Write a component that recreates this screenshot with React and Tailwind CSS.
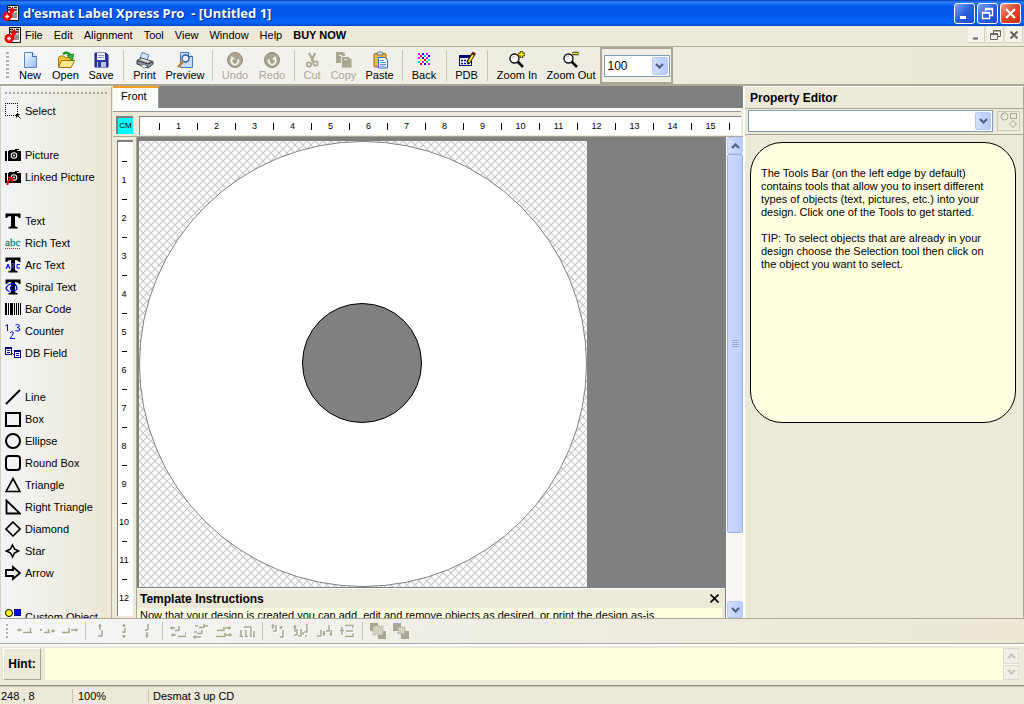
import React from "react";

const G = "#a9a691";

/* ---------- main toolbar icons (20 x 18) ---------- */
const Ico = ({ children, w = 20, h = 18 }) => (
  <svg width={w} height={h} viewBox={`0 0 ${w} ${h}`} fill="none" aria-hidden="true" className="block shrink-0">
    {children}
  </svg>
);

const NewIcon = () => (
  <Ico>
    <defs>
      <linearGradient id="pg" x1="0" y1="0" x2="1" y2="1">
        <stop offset="0" stopColor="#ffffff" />
        <stop offset="1" stopColor="#8fb8f0" />
      </linearGradient>
    </defs>
    <path d="M4.500 1.500H12.500L16.500 5.500V16.500H4.500Z" fill="url(#pg)" stroke="#5a86c8" />
    <path d="M12.500 1.500V5.500H16.500" fill="#e8f1ff" stroke="#3a66b0" />
  </Ico>
);
const OpenIcon = () => (
  <Ico>
    <path d="M2.500 16V6.500L4 5H8L9.500 6.500H15.500V9" fill="#f3c33c" stroke="#a8750a" />
    <path d="M2.500 16.500L5.500 9.500H18.500L15 16.500Z" fill="#ffe88a" stroke="#a8750a" />
    <path d="M7 3Q12 0 14.500 4.500" stroke="#1c8a1c" strokeWidth="2.400" />
    <path d="M11 4.500L17.500 3L16.500 10Z" fill="#35b635" stroke="#146a14" strokeWidth="0.700" />
  </Ico>
);
const SaveIcon = () => (
  <Ico>
    <path d="M4 2H15L17 4V16H4Z" fill="#2f35a8" stroke="#1b1f7a" />
    <rect x="6" y="2" width="8" height="7" fill="#e9eefb" />
    <path d="M7 4.500H13M7 6.500H13" stroke="#8d94c9" />
    <rect x="6" y="11" width="9" height="5" fill="#b9c0e6" />
    <rect x="7" y="11" width="3" height="5" fill="#2f35a8" />
  </Ico>
);
const PrintIcon = () => (
  <Ico>
    <path d="M5 7L7 1.500L14 4L12 9Z" fill="#cfe2ff" stroke="#5d83bd" />
    <path d="M2 9.500L6 7L18 10.500V13L13 17L2 13Z" fill="#8d949c" stroke="#3a3f46" />
    <path d="M2 9.500L13 13L18 10.500" stroke="#33373c" />
    <path d="M4 8.800L7 7.400L15 10L12.500 11.500Z" fill="#d6dbe0" />
    <path d="M5 14.500L9 13.500L13 15L9.500 17Z" fill="#f4f7fb" stroke="#565b62" strokeWidth="0.700" />
  </Ico>
);
const PreviewIcon = () => (
  <Ico>
    <path d="M5.500 1.500H13.500L17.500 5.500V16.500H5.500Z" fill="#c8dcfa" stroke="#4778c4" />
    <path d="M13.500 1.500V5.500H17.500" fill="#fff" stroke="#3a66b0" />
    <circle cx="10.500" cy="7.500" r="3.500" fill="#eef6ff" stroke="#2d5fb0" strokeWidth="1.400" />
    <path d="M8 10.500L3.500 15.500" stroke="#c07b28" strokeWidth="2.400" strokeLinecap="round" />
  </Ico>
);
const UndoIcon = () => (
  <Ico>
    <circle cx="10" cy="9" r="7.500" fill={G} stroke="#8f8c7a" />
    <path d="M7 8A3.500 3.500 0 1 0 13 8.500" stroke="#f3f2ea" strokeWidth="1.800" />
    <path d="M5.500 9.500L6.500 5L10 8Z" fill="#f3f2ea" />
  </Ico>
);
const RedoIcon = () => (
  <Ico>
    <circle cx="10" cy="9" r="7.500" fill={G} stroke="#8f8c7a" />
    <path d="M13 8A3.500 3.500 0 1 1 7 8.500" stroke="#f3f2ea" strokeWidth="1.800" />
    <path d="M14.500 9.500L13.500 5L10 8Z" fill="#f3f2ea" />
  </Ico>
);
const CutIcon = () => (
  <Ico>
    <path d="M7 2L11.500 11M13 2L9.500 10" stroke={G} strokeWidth="2" />
    <circle cx="7" cy="13.500" r="2.200" stroke={G} strokeWidth="1.700" />
    <circle cx="13.500" cy="12.500" r="2.200" stroke={G} strokeWidth="1.700" />
  </Ico>
);
const CopyIcon = () => (
  <Ico>
    <path d="M2 1H9L11 3V12H2Z" fill={G} />
    <path d="M7.500 5.500H14L18 8.500V17H7.500Z" fill={G} stroke="#ece9dc" />
    <path d="M10 8.500H13M5 4.500H8" stroke="#ece9dc" />
  </Ico>
);
const PasteIcon = () => (
  <Ico>
    <rect x="4" y="2.500" width="12" height="13.500" rx="1" fill="#f0b93a" stroke="#9a6b12" />
    <path d="M7 4V2L8.500 1H11.500L13 2V4Z" fill="#d5dae4" stroke="#555e70" strokeWidth="0.800" />
    <path d="M8.500 6.500H15L17.500 9V17H8.500Z" fill="#f2f7ff" stroke="#3a6cc0" />
    <path d="M10 9.500H14M10 11.500H16M10 13.500H16M10 15.200H15" stroke="#5f92dd" />
  </Ico>
);
const confetti = [
  ["#f0f", 4, 2], ["#00f", 8, 2], ["#f0f", 12, 2], ["#f00", 6, 4], ["#0cf", 10, 4], ["#00f", 14, 4],
  ["#f0f", 4, 6], ["#00c", 8, 6], ["#f0f", 12, 6], ["#ff0", 6, 8], ["#f00", 10, 8], ["#0ff", 14, 8],
  ["#0cf", 4, 10], ["#f0f", 8, 10], ["#3c3", 12, 10], ["#f00", 6, 12], ["#00f", 10, 12], ["#f0f", 14, 12],
];
const BackIcon = () => (
  <Ico>
    <rect x="4" y="2" width="12" height="12" fill="#fff" />
    {confetti.map(([c, x, y], i) => <rect key={i} x={x} y={y} width="2" height="2" fill={c} />)}
  </Ico>
);
const PdbIcon = () => (
  <Ico>
    <rect x="2.500" y="4.500" width="12" height="10" fill="#fff" stroke="#000080" />
    <rect x="2" y="4" width="13" height="3" fill="#000080" />
    <path d="M4 9.500H13M4 12.500H13" stroke="#000080" strokeWidth="1.500" strokeDasharray="2 1" />
    <path d="M17 2L11 12" stroke="#222" strokeWidth="4" />
    <path d="M16 4L11.800 11" stroke="#ffe600" strokeWidth="2" />
    <path d="M17.500 1.500L16.500 3" stroke="#8a1414" strokeWidth="3" />
  </Ico>
);
const Lens = ({ plus }) => (
  <Ico>
    <circle cx="7.500" cy="7.500" r="4.500" fill="#fff" stroke="#111" strokeWidth="1.400" />
    <path d="M10.500 10.500L16 16" stroke="#111" strokeWidth="2.600" />
    <path d="M5 6.500Q6 5 8 5" stroke="#aaa" />
    {plus && <path d="M11 3.500H18M14.500 0V7" stroke="#222" strokeWidth="3.400" />}
    {plus && <path d="M11.500 3.500H17.500M14.500 0.500V6.500" stroke="#ffeb00" strokeWidth="1.800" />}
    {!plus && <path d="M11.500 2.500H17.500" stroke="#222" strokeWidth="3.400" />}
    {!plus && <path d="M12 2.500H17" stroke="#ffeb00" strokeWidth="1.600" />}
  </Ico>
);

const AppLogo = () => (
  <Ico w={17} h={18}>
    <path d="M5.500 1.500H16.500V16.500H5.500Z" fill="#f4f4f4" stroke="#111" />
    <path d="M6 3.500H16M6 6H16" stroke="#222" strokeDasharray="3 1 1 1" strokeWidth="1.600" />
    <path d="M8 9V13M10 8V14M12 9V14M14 8V14" stroke="#333" />
    <circle cx="5" cy="12.500" r="4.500" fill="#e00" />
    <circle cx="10" cy="6.500" r="2.500" fill="#e00" />
    <path d="M9 6V14" stroke="#e00" strokeWidth="2.200" />
    <path d="M5 10.500V14.500M3 12.500H7" stroke="#fff" strokeWidth="1.300" />
  </Ico>
);

/* ---------- toolbox icons (16 x 16) ---------- */
const K = { stroke: "#000", strokeWidth: 2 };
const BigT = () => <path d="M0.500 0.500H15.500V5H14Q13.500 3 10 3V12.500Q10 14 12.500 14V15.500H3.500V14Q6 14 6 12.500V3Q2.500 3 2 5H0.500Z" fill="#000" />;
const Camera = () => (
  <g>
    <path d="M0 4H4V3H10V2H14V4H16V14H0Z" fill="#000" />
    <path d="M2.500 4V14" stroke="#fff" />
    <circle cx="9" cy="8.500" r="3.300" fill="#fff" />
    <circle cx="9" cy="8.500" r="2.200" fill="#000" />
    <circle cx="9" cy="8.500" r="1" fill="#fff" />
    <path d="M12 3.500H14" stroke="#fff" />
  </g>
);
const toolIcons = {
  Select: (
    <g>
      <path d="M0 0.500H13M0 12.500H11" stroke="#000" strokeDasharray="1 1" />
      <path d="M0.500 0V13M12.500 0V11" stroke="#000" strokeDasharray="1 1" />
      <path d="M12 12L15.500 15.500" stroke="#000" />
      <path d="M11 11H15L11 15Z" fill="#000" />
    </g>
  ),
  Picture: <Camera />,
  "Linked Picture": (
    <g>
      <Camera />
      <path d="M2.500 16V13L6 9.500" stroke="#f00" strokeWidth="2" />
      <path d="M2.500 8H8V13.500Z" fill="#f00" />
    </g>
  ),
  Text: <BigT />,
  "Rich Text": (
    <g>
      <text x="0" y="11" fontSize="11" fontFamily="Liberation Serif, serif" fill="#16867a" stroke="#16867a" strokeWidth="0.300">abc</text>
      <path d="M0 13.500H16" stroke="#b33" strokeDasharray="1 1" />
    </g>
  ),
  "Arc Text": (
    <g>
      <BigT />
      <path d="M1 12L3 7L5 12M2 10H4" stroke="#00f" />
      <path d="M6.500 12V6.500H9V9H7L9.500 12" stroke="#44f" />
      <path d="M15 7.500H12V11H15" stroke="#00f" />
    </g>
  ),
  "Spiral Text": (
    <g>
      <BigT />
      <path d="M8 8Q6 6.500 5.500 9T9 11.500T11.500 7.500T6.500 4.500T1.500 8T4.500 12.500" stroke="#00e" strokeWidth="1.300" />
    </g>
  ),
  "Bar Code": <path d="M0 2H2V14H0ZM3 2H4V14H3ZM5 2H8V14H5ZM9 2H10V14H9ZM11 2H12V14H11ZM13 2H14V14H13ZM15 2H16V14H15Z" fill="#000" />,
  Counter: (
    <g stroke="#00f">
      <path d="M0.500 3L2.500 1.500V8" />
      <path d="M5 10Q6 8 8 9Q9 10.500 5 15.500H10" />
      <path d="M10.500 2Q13 0.500 14.500 2.500Q14.500 4.500 12 4.500Q15 4.500 15 7Q13 9 10.500 7.500" />
    </g>
  ),
  "DB Field": (
    <g stroke="#000080">
      <rect x="0.500" y="2.500" width="6" height="7" fill="#fff" />
      <path d="M1 3.500H6.500M2 5.500H5M2 7.500H5" />
      <rect x="9.500" y="5.500" width="6" height="7" fill="#fff" />
      <path d="M10 6.500H15.500M11 8.500H14M11 10.500H14" />
      <path d="M7 8L9 10" stroke="#c22" />
    </g>
  ),
  Line: <path d="M1 15L15 1" {...K} />,
  Box: <rect x="1" y="2" width="14" height="13" {...K} />,
  Ellipse: <circle cx="8" cy="8" r="7" {...K} />,
  "Round Box": <rect x="1" y="1" width="14" height="14" rx="3" {...K} />,
  Triangle: <path d="M8 1.500L15 14.500H1Z" stroke="#000" strokeWidth="1.600" />,
  "Right Triangle": <path d="M1.500 1.500V14.500H15Z" stroke="#000" strokeWidth="1.800" />,
  Diamond: <path d="M8 1L15 8L8 15L1 8Z" stroke="#000" strokeWidth="1.600" />,
  Star: <path d="M7.500 2L9.500 6L13.500 8L9.500 10L7.500 14L5.500 10L1.500 8L5.500 6Z" stroke="#000" strokeWidth="1.600" />,
  Arrow: <path d="M1 5H8V2L15 8L8 14V11H1Z" stroke="#000" strokeWidth="1.800" />,
  "Custom Object": (
    <g>
      <circle cx="4" cy="4" r="3.500" fill="#ff0" stroke="#000" />
      <rect x="9.500" y="0.500" width="6" height="6" fill="#00f" stroke="#000080" />
    </g>
  ),
};
const tools = [
  ["Select"],
  ["Picture", "Linked Picture"],
  ["Text", "Rich Text", "Arc Text", "Spiral Text", "Bar Code", "Counter", "DB Field"],
  ["Line", "Box", "Ellipse", "Round Box", "Triangle", "Right Triangle", "Diamond", "Star", "Arrow"],
  ["Custom Object"],
];

/* ---------- main toolbar data ---------- */
const bar = [
  ["New", NewIcon, "w-9"], ["Open", OpenIcon, "w-[35px]"], ["Save", SaveIcon, "w-9"], null,
  ["Print", PrintIcon, "w-[35px]"], ["Preview", PreviewIcon, "w-[46px]"], null,
  ["Undo", UndoIcon, "w-[38px]", true], ["Redo", RedoIcon, "w-9", true], null,
  ["Cut", CutIcon, "w-7", true], ["Copy", CopyIcon, "w-[35px]", true], ["Paste", PasteIcon, "w-[37px]"], null,
  ["Back", BackIcon, "w-9"], null,
  ["PDB", PdbIcon, "w-[33px]"], null,
  ["Zoom In", () => <Lens plus />, "w-[52px]"], ["Zoom Out", () => <Lens />, "w-14"],
];

/* ---------- alignment strip data: [label, path] ---------- */
const al = [
  [
    ["Align left", "M1 7H6M3 5.500V8.500M7 9.500H16M14.500 9V5"],
    ["Align centre", "M1 7H3M2 6V8M5 9.500H11M9.500 9V6M12 8H16M14 6.500V9.500"],
    ["Align right", "M0 9.500H8M7 9V5M9 7H16M14 5.500V8.500"],
  ],
  [
    ["Align top", "M7 1V7M5.500 3H8.500M9 7V14M9 13H5"],
    ["Align middle", "M8 1V4M6.500 3H9.500M9 5V10M9 9H6M8 12V15M6.500 13H9.500"],
    ["Align bottom", "M9 1V7M9 7H6M8 9V15M6.500 12.500H9.500"],
  ],
  [
    ["Left edges", "M0 5H5M2 3.500V6.500M5 7.500H9V3M1 12H6M3 10.500V13.500M8 13.500H16V9"],
    ["Centres", "M2 3H5M6 4.500H11V1M11 3H15M1 9H4M4 10.500H9V7M0 14H8M2 12.500V15.500"],
    ["Right edges", "M1 7.500H8V4M9 5H15M13 3.500V6.500M0 13.500H9V10M10 12H16M14 10.500V13.500"],
    ["Space across", "M2 14V7M0.500 13.500H4M5 4H12M7 14V7M6 13.500H9M12 14V4M15 14V8M14 13.500H16"],
  ],
  [
    ["Top edges", "M3 1V6M1.500 3H4.500M6 2V8H3M11 3V6M9.500 4.500H12.500M13 7V14H10"],
    ["Middles", "M2 2V9M0.500 4H3.500M4 6V12H1M8 6V13H5M10 9V12M14 1V9H11M13 12V14"],
    ["Bottom edges", "M5 7V13H1M8 8V13M6.500 10.500H9.500M13 2V8H10M15 7V13M13.500 10.500H16"],
    ["Space down", "M6 2.500H14V5M3 4V12M1 7.500H5M7 8H14M6 13.500H14V10"],
  ],
];

const Grad = "bg-[linear-gradient(100deg,#f5f6f8_0%,#efeee4_45%,#ebe7d3_100%)]";
const Sep = () => (
  <span className="flex w-2 shrink-0 justify-center self-stretch">
    <span className="my-[3px] w-px bg-[#c9c5ae]" />
  </span>
);
const Chevron = ({ up, c = "#4d6185" }) => (
  <svg width="9" height="6" viewBox="0 0 9 6" fill="none" aria-hidden="true">
    <path d={up ? "M1 5L4.500 1.500L8 5" : "M1 1L4.500 4.500L8 1"} stroke={c} strokeWidth="2.200" />
  </svg>
);
const blueBtn = "flex shrink-0 items-center justify-center rounded-[2px] border border-[#b7caf5] bg-[linear-gradient(90deg,#d3e0fd,#b6cbf9)]";

const Combo = ({ id, label, value, className }) => (
  <div className={`relative flex h-[22px] border border-[#7f9db9] bg-white ${className}`}>
    <label htmlFor={id} className="sr-only">{label}</label>
    <select id={id} defaultValue={value} className="h-full w-full appearance-none bg-transparent pl-[3px] text-[12px] leading-[18px] outline-none">
      <option value={value}>{value}</option>
    </select>
    <span className={`pointer-events-none absolute inset-y-px right-px w-4 ${blueBtn}`}><Chevron /></span>
  </div>
);

const WinBtn = ({ label, red, children }) => (
  <button aria-label={label} className={`flex size-[21px] items-center justify-center rounded-[3px] border border-white ${red ? "bg-[linear-gradient(135deg,#f0a088,#e0452a_50%,#c33010)]" : "bg-[linear-gradient(135deg,#7fa5f5,#2a5fe0_50%,#1c49c8)]"}`}>
    <svg width="15" height="15" viewBox="0 0 15 15" fill="none" stroke="#fff" aria-hidden="true">{children}</svg>
  </button>
);
const MdiBtn = ({ label, children }) => (
  <button aria-label={label} className="flex h-4 w-[17px] items-center justify-center border-r border-b border-[#d5d1bd] bg-[#f5f4ee]">
    <svg width="12" height="12" viewBox="0 0 12 12" fill="none" stroke="#6b6858" aria-hidden="true">{children}</svg>
  </button>
);
const restore = <path d="M4.500 4V1.500H11.500V7.500H9M4.500 2H11.500M1.500 4.500H8.500V10.500H1.500ZM1.500 5.500H8.500" />;

const hNums = Array.from({ length: 15 }, (_, i) => i + 1);
const vNums = hNums.slice(0, 12);

function Header() {
  return (
    <header className="shrink-0">
      <div className="flex h-[26px] items-center bg-[linear-gradient(180deg,#0a3cc0_0%,#2b82f8_8%,#0458e8_25%,#0459ee_60%,#0566fb_85%,#0346c8_100%)] pl-[2px] pr-[3px]">
        <AppLogo />
        <h1 className="ml-[4px] flex-1 whitespace-pre font-['Noto_Sans',sans-serif] text-[13px] leading-none font-bold text-white [text-shadow:1px_1px_0_#0a2a80]">d'esmat Label Xpress Pro  - [Untitled 1]</h1>
        <div className="flex gap-[2px]">
          <WinBtn label="Minimize"><path d="M3 11.500H9" strokeWidth="3" /></WinBtn>
          <WinBtn label="Restore"><path d="M5.500 5V2.500H12.500V9.500H10M5 3.500H13M2.500 6.500H9.500V12.500H2.500ZM2 7H10" strokeWidth="1.300" /></WinBtn>
          <WinBtn label="Close" red><path d="M3 3L12 12M12 3L3 12" strokeWidth="2.200" /></WinBtn>
        </div>
      </div>
      <nav className="flex h-5 items-center bg-[#ece9d8] pb-[2px] pl-[4px]">
        <AppLogo />
        <div className="flex flex-1 gap-[11px] pl-[4px]">
          {["File", "Edit", "Alignment", "Tool", "View", "Window", "Help"].map((m) => <button key={m}>{m}</button>)}
          <button className="font-bold">BUY NOW</button>
        </div>
        <div className="flex gap-[2px] pr-px">
          <MdiBtn label="Minimize document"><path d="M3 9.500H8" strokeWidth="2" /></MdiBtn>
          <MdiBtn label="Restore document">{restore}</MdiBtn>
          <MdiBtn label="Close document"><path d="M2.500 2.500L9.500 9.500M9.500 2.500L2.500 9.500" strokeWidth="2" /></MdiBtn>
        </div>
      </nav>
      <div className={`flex h-[40px] items-stretch border-t border-b-2 border-t-[#b5b19d] border-b-[#aca899] pl-[6px] ${Grad}`}>
        <span className="my-[5px] mr-[3px] w-[3px] bg-[repeating-linear-gradient(180deg,#b5b19d_0_2px,transparent_2px_4px)]" />
        {bar.map((b, i) => {
          if (!b) return <Sep key={i} />;
          const [name, Icon, w, off] = b;
          return (
            <button key={name} disabled={off} className={`flex shrink-0 flex-col items-center pt-[4px] whitespace-nowrap ${w} ${off ? "text-[#aca899]" : ""}`}>
              <Icon />
              <span className="leading-[13px]">{name}</span>
            </button>
          );
        })}
        <div className="ml-px flex w-[73px] items-center justify-center border-2 border-[#aca899] bg-[#f1efe4]">
          <Combo id="zoom" label="Zoom" value="100" className="w-[66px]" />
        </div>
      </div>
    </header>
  );
}

function Toolbox() {
  return (
    <aside className="flex w-28 shrink-0 flex-col overflow-hidden border-t border-r border-l border-t-white border-r-[#b5b19d] border-l-[#d5d1bd] bg-[linear-gradient(90deg,#f3f4f7_0%,#efeee6_45%,#ebe7d4_100%)] pl-[4px]">
      <div className="mt-[5px] mr-[4px] mb-[6px] h-[2px] shrink-0 bg-[repeating-linear-gradient(90deg,#aca899_0_2px,transparent_2px_4px)]" />
      <div className="flex flex-col gap-[22px]">
        {tools.map((g) => (
          <div key={g[0]} className="flex flex-col">
            {g.map((t) => (
              <button key={t} className="flex h-[22px] items-center gap-1 text-left whitespace-nowrap">
                <Ico w={16} h={16}>{toolIcons[t]}</Ico>
                {t}
              </button>
            ))}
          </div>
        ))}
      </div>
    </aside>
  );
}

function Disc() {
  return (
    <svg width="448" height="446" viewBox="0 0 448 446" className="mt-[3px] ml-[2px] block shrink-0" role="img" aria-label="Disc label">
      <defs>
        <pattern id="hatch" width="8" height="8" patternUnits="userSpaceOnUse">
          <path d="M-1 -1L9 9M9 -1L-1 9" stroke="#c6c6c6" strokeWidth="1.100" />
        </pattern>
      </defs>
      <rect width="448" height="446" fill="#fff" />
      <rect width="448" height="446" fill="url(#hatch)" />
      <ellipse cx="224" cy="223" rx="223.500" ry="222.500" fill="#fff" stroke="#808080" />
      <circle cx="223" cy="222" r="59.500" fill="#808080" stroke="#000" />
    </svg>
  );
}

function Workspace() {
  return (
    <main className="flex min-w-0 flex-1 flex-col overflow-hidden bg-[#ece9d8] pl-px">
      <div className="flex h-[22px] shrink-0 bg-[#808080]">
        <button className="flex w-[46px] items-start border-t-2 border-r border-t-[#f5a01e] border-r-[#919b9c] bg-[#fcfcfa] pt-px pl-[8px]">Front</button>
      </div>
      <div className="mr-[2px] h-[4px] shrink-0 border-b border-[#919b9c] bg-[#fcfcfa]" />
      <div className="flex h-[25px] shrink-0 items-start border-b border-[#aca899]">
        <button className="mt-[4px] ml-[3px] flex h-[18px] w-[17px] items-center justify-center border-t-2 border-l-2 border-[#808080] bg-[#00ffff] text-[8px] leading-none">CM</button>
        <div className="mt-[4px] mr-[2px] ml-[6px] flex h-[19px] min-w-0 flex-1 items-center overflow-hidden border-t border-l border-[#808080] bg-white pl-[19px] text-[9px] leading-none">
          {hNums.map((n) => (
            <span key={n} className="flex w-[38px] shrink-0 items-center">
              <span className="h-[7px] w-px bg-black" />
              <span className="flex-1 text-center">{n}</span>
            </span>
          ))}
          <span className="h-[7px] w-px shrink-0 bg-black" />
        </div>
      </div>
      <div className="flex min-h-0 flex-1">
        <div className="flex w-6 shrink-0 overflow-hidden border-r border-[#aca899] pt-[3px] pb-[2px] pl-[4px]">
          <div className="flex w-4 flex-col overflow-hidden border-t-2 border-l border-[#808080] bg-white pt-[19px] pr-[3px] text-[9px] leading-none">
            {vNums.map((n) => (
              <span key={n} className="flex h-[38px] shrink-0 flex-col items-center">
                <span className="h-px w-[5px] bg-black" />
                <span className="flex flex-1 items-center">{n}</span>
              </span>
            ))}
          </div>
        </div>
        <div className="flex min-w-0 flex-1 flex-col bg-[#808080]">
          <div className="min-h-0 flex-1 overflow-hidden pt-px"><Disc /></div>
          <section className="mr-px h-[30px] shrink-0 overflow-hidden border-t border-white bg-[#ece9d8]">
            <div className="flex h-[19px] items-center justify-between pr-[6px] pl-[3px]">
              <h2 className="text-[12px] font-bold">Template Instructions</h2>
              <button aria-label="Close instructions">
                <svg width="9" height="9" viewBox="0 0 9 9" aria-hidden="true"><path d="M0.500 0.500L8.500 8.500M8.500 0.500L0.500 8.500" stroke="#000" strokeWidth="1.600" /></svg>
              </button>
            </div>
            <p className="mr-[3px] h-5 overflow-hidden bg-[#ffffe1] pl-[3px] leading-[14px] whitespace-nowrap">Now that your design is created you can add, edit and remove objects as desired, or print the design as-is.</p>
          </section>
        </div>
        <div className="flex w-[17px] shrink-0 flex-col border-l border-white bg-[#f8f7f3]">
          <button aria-label="Scroll up" className={`h-[17px] ${blueBtn}`}><Chevron up /></button>
          <div className="flex min-h-0 flex-1 flex-col">
            <div className="flex h-[379px] flex-col items-center justify-center gap-px rounded-[2px] border border-[#98b0e8] bg-[linear-gradient(90deg,#cbd9fd,#bbcefb)]">
              {[0, 1, 2, 3].map((k) => <span key={k} className="h-px w-[7px] bg-[#8fabea]" />)}
            </div>
          </div>
          <button aria-label="Scroll down" className={`h-[17px] ${blueBtn}`}><Chevron /></button>
        </div>
      </div>
    </main>
  );
}

function Properties() {
  return (
    <aside className="flex w-[281px] shrink-0 flex-col border-t border-r border-l-2 border-t-white border-r-[#aca899] border-l-white bg-[#ece9d8]">
      <h2 className="flex h-[22px] items-center border-b border-[#aca899] pt-px pl-[5px] text-[12px] font-bold">Property Editor</h2>
      <div className="flex h-[26px] items-center gap-1 border-b border-[#aca899] pr-[3px] pb-[2px] pl-[3px]">
        <Combo id="object" label="Object" value="" className="flex-1" />
        <button aria-label="Select object" className="flex h-5 w-[23px] items-center justify-center border border-[#d0ccb8]">
          <svg width="18" height="17" viewBox="0 0 18 17" fill="none" stroke="#aca899" aria-hidden="true">
            <circle cx="4.500" cy="4.500" r="3.500" /><rect x="10.500" y="1.500" width="6" height="5" /><path d="M13 8.500L16.500 12L13 15.500L9.500 12Z" />
          </svg>
        </button>
      </div>
      <div className="mt-[7px] mr-[7px] ml-[5px] min-h-[281px] rounded-[32px] border border-black bg-[#ffffe1] px-[10px] pt-[24px] leading-[13px]">
        <div className="flex flex-col gap-[13px] whitespace-nowrap">
          <p>The Tools Bar (on the left edge by default)<br />contains tools that allow you to insert different<br />types of objects (text, pictures, etc.) into your<br />design. Click one of the Tools to get started.</p>
          <p>TIP: To select objects that are already in your<br />design choose the Selection tool then click on<br />the object you want to select.</p>
        </div>
      </div>
    </aside>
  );
}

function Footer() {
  return (
    <footer className="shrink-0">
      <div className={`flex h-[26px] items-stretch border-t border-b border-[#aca899] pl-[6px] ${Grad}`}>
        <span className="my-[5px] mr-[4px] w-[2px] bg-[repeating-linear-gradient(180deg,#b5b19d_0_2px,transparent_2px_4px)]" />
        {al.map((g, i) => (
          <React.Fragment key={i}>
            {i > 0 && <Sep />}
            {g.map(([name, d]) => (
              <button key={name} aria-label={name} disabled className="flex w-[23px] items-center justify-center">
                <Ico w={16} h={16}>
                  <path d={d} stroke="#fff" strokeWidth="1.500" transform="translate(1 1)" />
                  <path d={d} stroke={G} strokeWidth="1.500" />
                </Ico>
              </button>
            ))}
          </React.Fragment>
        ))}
        <Sep />
        {["Bring to front", "Send to back"].map((name, i) => (
          <button key={name} aria-label={name} disabled className="flex w-[23px] items-center justify-center">
            <Ico w={16} h={16}>
              <rect x="0" y="0" width="8" height="8" fill={G} />
              <rect x="8" y="8" width="8" height="8" fill={G} />
              <rect x={i ? 5 : 3} y={i ? 4 : 3} width={i ? 7 : 10} height={i ? 7 : 9} fill="#d2cfbf" stroke={G} strokeDasharray="1 1" />
            </Ico>
          </button>
        ))}
      </div>
      <div className="flex h-[42px] items-stretch border-t-2 border-b border-t-white border-b-[#8f8c7a] bg-[#ece9d8] pt-[2px] pr-[5px] pb-[5px] pl-[3px]">
        <label htmlFor="hint" className="flex w-[38px] items-center justify-center border border-t-white border-r-[#aca899] border-b-[#aca899] border-l-white text-[12px] font-bold">Hint:</label>
        <textarea id="hint" readOnly className="ml-[4px] min-w-0 flex-1 resize-none bg-[#ffffe1] outline-none" />
        <div className="flex w-4 flex-col gap-px bg-[#f8f7f3]">
          <button aria-label="Hint up" disabled className="flex flex-1 items-center justify-center border border-[#dedbcc] bg-[#f1efe6]"><Chevron up c="#c9c7ba" /></button>
          <button aria-label="Hint down" disabled className="flex flex-1 items-center justify-center border border-[#dedbcc] bg-[#f1efe6]"><Chevron c="#c9c7ba" /></button>
        </div>
      </div>
      <div className="flex h-[18px] items-center border-t border-[#c9c5b2] bg-[#ece9d8]">
        <span className="w-[73px] border-r border-[#c9c5b2] pl-px">248 , 8</span>
        <span className="w-[76px] border-r border-[#c9c5b2] pl-[5px]">100%</span>
        <span className="pl-1">Desmat 3 up CD</span>
      </div>
    </footer>
  );
}

export default function App() {
  return (
    <div className="flex h-screen flex-col overflow-hidden bg-[#ece9d8] font-['Liberation_Sans',Arial,sans-serif] text-[11px] leading-[14px] text-black">
      <Header />
      <div className="flex min-h-0 flex-1">
        <Toolbox />
        <Workspace />
        <Properties />
      </div>
      <Footer />
    </div>
  );
}
